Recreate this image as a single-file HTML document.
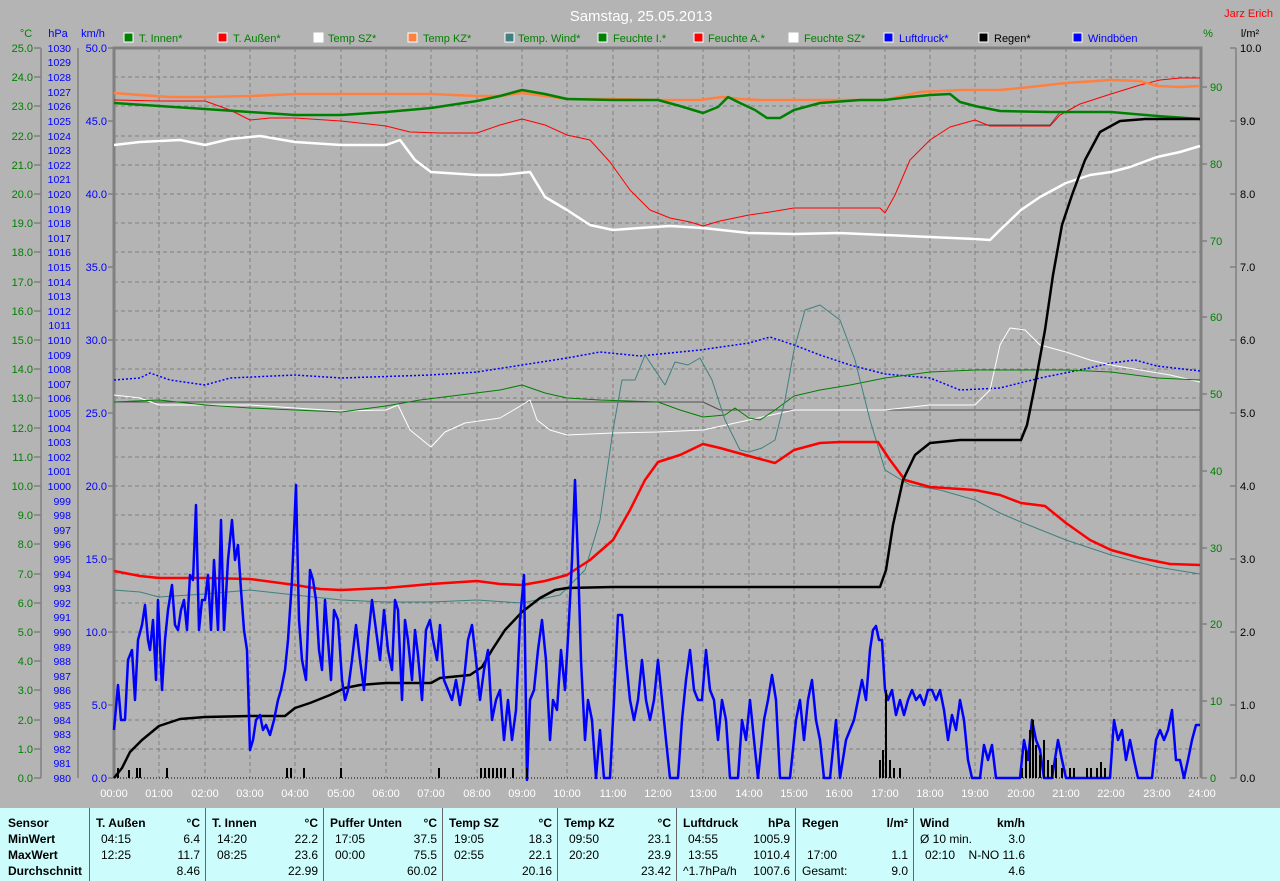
<!DOCTYPE html>
<html><head><meta charset="utf-8"><style>
html,body{margin:0;padding:0;background:#b4b4b4;width:1280px;height:881px;overflow:hidden}
svg{display:block;font-family:"Liberation Sans",sans-serif}
.tb{position:absolute;left:0;top:808px;width:1280px;height:73px;background:#ccfcfc;font-family:"Liberation Sans",sans-serif;font-size:12px;color:#000}
.c{position:absolute;top:0;height:73px;border-left:1px solid #666}
.r{position:absolute;white-space:nowrap}
.b{font-weight:bold}
</style></head><body>
<svg width="1280" height="808" viewBox="0 0 1280 808" xmlns="http://www.w3.org/2000/svg">
<rect width="1280" height="808" fill="#b4b4b4"/>
<text x="641" y="21" fill="#fff" font-size="15" text-anchor="middle">Samstag, 25.05.2013</text>
<text x="1273" y="17" fill="#f00" font-size="11" text-anchor="end">Jarz Erich</text>
<g font-size="11">
<rect x="124" y="33" width="9" height="9" fill="#008000" stroke="#fff"/><text x="139" y="42" fill="#008000">T. Innen*</text>
<rect x="218" y="33" width="9" height="9" fill="#f00" stroke="#fff"/><text x="233" y="42" fill="#008000">T. Außen*</text>
<rect x="314" y="33" width="9" height="9" fill="#fff" stroke="#fff"/><text x="328" y="42" fill="#008000">Temp SZ*</text>
<rect x="408" y="33" width="9" height="9" fill="#ff8040" stroke="#fff"/><text x="423" y="42" fill="#008000">Temp KZ*</text>
<rect x="505" y="33" width="9" height="9" fill="#408080" stroke="#fff"/><text x="518" y="42" fill="#008000">Temp. Wind*</text>
<rect x="598" y="33" width="9" height="9" fill="#008000" stroke="#fff"/><text x="613" y="42" fill="#008000">Feuchte I.*</text>
<rect x="694" y="33" width="9" height="9" fill="#f00" stroke="#fff"/><text x="708" y="42" fill="#008000">Feuchte A.*</text>
<rect x="789" y="33" width="9" height="9" fill="#fff" stroke="#fff"/><text x="804" y="42" fill="#008000">Feuchte SZ*</text>
<rect x="884" y="33" width="9" height="9" fill="#00f" stroke="#fff"/><text x="899" y="42" fill="#00f">Luftdruck*</text>
<rect x="979" y="33" width="9" height="9" fill="#000" stroke="#fff"/><text x="994" y="42" fill="#000">Regen*</text>
<rect x="1073" y="33" width="9" height="9" fill="#00f" stroke="#fff"/><text x="1088" y="42" fill="#00f">Windböen</text>
<text x="26" y="37" fill="#008000" text-anchor="middle">°C</text>
<text x="58" y="37" fill="#00f" text-anchor="middle">hPa</text>
<text x="93" y="37" fill="#00f" text-anchor="middle">km/h</text>
<text x="1208" y="37" fill="#008000" text-anchor="middle">%</text>
<text x="1250" y="37" fill="#000" text-anchor="middle">l/m²</text>
</g>
<!-- grid -->
<g stroke="#808080" stroke-dasharray="4,3" stroke-width="1">
<path d="M114 77H1200M114 106H1200M114 136H1200M114 165H1200M114 194H1200M114 223H1200M114 252H1200M114 282H1200M114 311H1200M114 340H1200M114 369H1200M114 398H1200M114 428H1200M114 457H1200M114 486H1200M114 515H1200M114 544H1200M114 574H1200M114 603H1200M114 632H1200M114 661H1200M114 690H1200M114 720H1200M114 749H1200"/>
<path d="M159 48V778M205 48V778M250 48V778M295 48V778M341 48V778M386 48V778M431 48V778M477 48V778M522 48V778M567 48V778M613 48V778M658 48V778M703 48V778M749 48V778M794 48V778M839 48V778M885 48V778M930 48V778M975 48V778M1021 48V778M1066 48V778M1111 48V778M1157 48V778"/>
</g>
<path d="M114 778H1200" stroke="#000" stroke-dasharray="1,2"/>
<path d="M114 778V48H1201V778" fill="none" stroke="#808080" stroke-width="3"/>
<!-- left axes -->
<path d="M41 48V778M78 48V778M34 48H41M34 77H41M34 106H41M34 136H41M34 165H41M34 194H41M34 223H41M34 252H41M34 282H41M34 311H41M34 340H41M34 369H41M34 398H41M34 428H41M34 457H41M34 486H41M34 515H41M34 544H41M34 574H41M34 603H41M34 632H41M34 661H41M34 690H41M34 720H41M34 749H41M34 778H41M108 48H114M108 121H114M108 194H114M108 267H114M108 340H114M108 413H114M108 486H114M108 559H114M108 632H114M108 705H114M108 778H114M1236 48V778M1230 48H1236M1230 121H1236M1230 194H1236M1230 267H1236M1230 340H1236M1230 413H1236M1230 486H1236M1230 559H1236M1230 632H1236M1230 705H1236M1230 778H1236M1201 87H1207M1201 164H1207M1201 241H1207M1201 317H1207M1201 394H1207M1201 471H1207M1201 548H1207M1201 624H1207M1201 701H1207M1201 778H1207" stroke="#808080" stroke-width="1.5"/>
<g font-size="11" fill="#008000" text-anchor="end">
<text x="33" y="52">25.0</text><text x="33" y="81">24.0</text><text x="33" y="110">23.0</text><text x="33" y="140">22.0</text><text x="33" y="169">21.0</text><text x="33" y="198">20.0</text><text x="33" y="227">19.0</text><text x="33" y="256">18.0</text><text x="33" y="286">17.0</text><text x="33" y="315">16.0</text><text x="33" y="344">15.0</text><text x="33" y="373">14.0</text><text x="33" y="402">13.0</text><text x="33" y="432">12.0</text><text x="33" y="461">11.0</text><text x="33" y="490">10.0</text><text x="33" y="519">9.0</text><text x="33" y="548">8.0</text><text x="33" y="578">7.0</text><text x="33" y="607">6.0</text><text x="33" y="636">5.0</text><text x="33" y="665">4.0</text><text x="33" y="694">3.0</text><text x="33" y="724">2.0</text><text x="33" y="753">1.0</text><text x="33" y="782">0.0</text>
</g>
<g font-size="11" fill="#008000">
<text x="1210" y="91">90</text><text x="1210" y="168">80</text><text x="1210" y="245">70</text><text x="1210" y="321">60</text><text x="1210" y="398">50</text><text x="1210" y="475">40</text><text x="1210" y="552">30</text><text x="1210" y="628">20</text><text x="1210" y="705">10</text><text x="1210" y="782">0</text>
</g>
<g font-size="11" fill="#000">
<text x="1240" y="52">10.0</text><text x="1240" y="125">9.0</text><text x="1240" y="198">8.0</text><text x="1240" y="271">7.0</text><text x="1240" y="344">6.0</text><text x="1240" y="417">5.0</text><text x="1240" y="490">4.0</text><text x="1240" y="563">3.0</text><text x="1240" y="636">2.0</text><text x="1240" y="709">1.0</text><text x="1240" y="782">0.0</text>
</g>
<g font-size="11" fill="#00f" text-anchor="end">
<text x="107" y="52">50.0</text><text x="107" y="125">45.0</text><text x="107" y="198">40.0</text><text x="107" y="271">35.0</text><text x="107" y="344">30.0</text><text x="107" y="417">25.0</text><text x="107" y="490">20.0</text><text x="107" y="563">15.0</text><text x="107" y="636">10.0</text><text x="107" y="709">5.0</text><text x="107" y="782">0.0</text>
</g>
<g font-size="10.5" fill="#00f" text-anchor="end">
<text x="71" y="52">1030</text><text x="71" y="66">1029</text><text x="71" y="81">1028</text><text x="71" y="96">1027</text><text x="71" y="110">1026</text><text x="71" y="125">1025</text><text x="71" y="140">1024</text><text x="71" y="154">1023</text><text x="71" y="169">1022</text><text x="71" y="183">1021</text><text x="71" y="198">1020</text><text x="71" y="213">1019</text><text x="71" y="227">1018</text><text x="71" y="242">1017</text><text x="71" y="256">1016</text><text x="71" y="271">1015</text><text x="71" y="286">1014</text><text x="71" y="300">1013</text><text x="71" y="315">1012</text><text x="71" y="329">1011</text><text x="71" y="344">1010</text><text x="71" y="359">1009</text><text x="71" y="373">1008</text><text x="71" y="388">1007</text><text x="71" y="402">1006</text><text x="71" y="417">1005</text><text x="71" y="432">1004</text><text x="71" y="446">1003</text><text x="71" y="461">1002</text><text x="71" y="475">1001</text><text x="71" y="490">1000</text><text x="71" y="505">999</text><text x="71" y="519">998</text><text x="71" y="534">997</text><text x="71" y="548">996</text><text x="71" y="563">995</text><text x="71" y="578">994</text><text x="71" y="592">993</text><text x="71" y="607">992</text><text x="71" y="621">991</text><text x="71" y="636">990</text><text x="71" y="651">989</text><text x="71" y="665">988</text><text x="71" y="680">987</text><text x="71" y="694">986</text><text x="71" y="709">985</text><text x="71" y="724">984</text><text x="71" y="738">983</text><text x="71" y="753">982</text><text x="71" y="767">981</text><text x="71" y="782">980</text>
</g>
<g font-size="11" fill="#fff" text-anchor="middle">
<text x="114" y="797">00:00</text><text x="159" y="797">01:00</text><text x="205" y="797">02:00</text><text x="250" y="797">03:00</text><text x="295" y="797">04:00</text><text x="341" y="797">05:00</text><text x="386" y="797">06:00</text><text x="431" y="797">07:00</text><text x="477" y="797">08:00</text><text x="522" y="797">09:00</text><text x="567" y="797">10:00</text><text x="613" y="797">11:00</text><text x="658" y="797">12:00</text><text x="703" y="797">13:00</text><text x="749" y="797">14:00</text><text x="794" y="797">15:00</text><text x="839" y="797">16:00</text><text x="885" y="797">17:00</text><text x="930" y="797">18:00</text><text x="975" y="797">19:00</text><text x="1021" y="797">20:00</text><text x="1066" y="797">21:00</text><text x="1111" y="797">22:00</text><text x="1157" y="797">23:00</text><text x="1202" y="797">24:00</text>
</g>
<g fill="none" stroke-linejoin="round">
<!-- dark gray thin -->
<polyline stroke="#505050" stroke-width="1" points="114,402 703,402 720,410 1200,410"/>
<polyline stroke="#505050" stroke-width="1" points="975,125 1050,125 1060,112"/>
<!-- blue dotted luftdruck -->
<polyline stroke="#00f" stroke-width="1.5" stroke-dasharray="2,2" points="114,380 140,378 150,373 170,380 205,385 230,378 295,375 341,378 431,375 477,372 522,365 567,358 600,352 640,356 700,350 749,343 770,337 794,345 820,355 850,365 885,374 930,378 960,390 1000,388 1040,378 1080,370 1111,363 1135,360 1157,366 1200,371"/>
<!-- white thin feuchte SZ -->
<polyline stroke="#fff" stroke-width="1" points="114,395 140,398 159,405 205,405 250,405 295,408 341,411 386,410 398,405 410,430 431,447 445,432 465,423 500,418 522,405 530,400 537,420 550,430 567,435 613,433 658,432 703,430 749,420 794,410 839,410 885,410 930,405 975,405 990,390 1000,345 1010,328 1025,330 1040,345 1066,352 1090,360 1111,365 1140,370 1170,375 1200,382"/>
<!-- green thin feuchte I -->
<polyline stroke="#008000" stroke-width="1" points="114,402 159,400 205,405 250,408 295,410 341,412 386,406 420,400 460,395 500,390 522,385 545,393 567,398 600,400 658,402 680,410 703,417 725,415 735,408 749,418 760,420 775,410 794,396 820,390 850,385 885,378 930,372 975,370 1020,370 1066,370 1111,372 1157,378 1200,380"/>
<!-- teal temp wind -->
<polyline stroke="#408080" stroke-width="1" points="114,590 140,592 159,597 205,594 250,590 295,595 341,600 386,602 431,602 477,600 522,603 560,595 585,570 600,520 613,430 622,380 635,380 645,355 655,370 665,385 675,362 688,365 700,358 712,380 725,420 740,450 749,452 762,448 775,440 785,400 794,350 805,310 820,305 840,320 855,360 870,420 885,470 910,485 940,490 975,500 1000,513 1021,522 1066,540 1111,555 1157,567 1200,574"/>
<!-- red thin feuchte A -->
<polyline stroke="#f00" stroke-width="1" points="114,100 159,101 205,101 230,110 250,120 270,118 295,118 341,121 386,126 410,132 440,133 477,133 500,125 522,119 545,125 567,135 590,140 610,162 630,190 650,210 670,218 690,222 703,226 720,221 749,215 770,212 794,208 839,208 880,208 885,213 895,195 910,160 930,140 950,127 975,120 990,126 1050,126 1060,115 1080,104 1111,94 1140,85 1160,80 1180,78 1200,78"/>
<!-- orange temp KZ -->
<polyline stroke="#ff8040" stroke-width="2.5" points="114,93 140,95 170,97 205,97 250,96 295,94 341,94 386,94 431,94 477,96 500,96 522,93 545,96 567,99 613,99 658,100 700,100 722,97 740,99 760,100 794,100 839,100 885,100 920,92 960,90 1000,90 1021,88 1066,83 1111,80 1140,81 1157,86 1180,87 1200,86"/>
<!-- green thick T innen -->
<polyline stroke="#008000" stroke-width="2.5" points="114,103 159,106 205,109 250,112 295,115 341,115 386,112 431,108 477,101 500,96 522,90 545,94 567,99 613,100 658,100 680,106 703,113 718,107 728,97 740,103 755,110 767,118 780,118 794,110 820,103 860,100 885,100 910,97 930,95 950,94 960,102 975,106 1000,111 1050,112 1111,112 1157,116 1200,119"/>
<!-- white thick temp SZ -->
<polyline stroke="#fff" stroke-width="2.5" points="114,145 140,142 180,140 205,145 230,139 260,136 295,142 341,145 386,145 400,140 415,160 431,172 477,175 500,175 530,172 545,197 567,210 590,225 613,230 640,228 670,226 703,228 749,233 794,234 839,233 885,235 930,237 975,239 990,240 1000,230 1021,210 1040,197 1066,183 1090,175 1111,172 1130,167 1157,157 1180,152 1200,146"/>
<!-- red thick T außen -->
<polyline stroke="#f00" stroke-width="2.5" points="114,571 140,576 159,578 205,578 250,579 295,585 320,589 341,590 386,588 431,584 477,581 500,584 522,585 545,581 567,575 590,560 613,540 630,510 645,480 658,462 680,455 703,444 720,448 749,456 775,463 794,450 820,443 840,442 878,442 890,460 905,480 930,487 975,490 1000,495 1021,503 1045,506 1066,523 1090,540 1111,550 1140,558 1170,564 1200,565"/>
<!-- black rain -->
<polyline stroke="#000" stroke-width="2.5" points="114,778 122,768 130,752 142,740 159,726 180,719 205,717 250,716 285,716 295,708 310,703 330,695 345,688 360,685 386,683 431,683 440,678 470,675 482,667 492,650 505,630 522,612 540,598 555,590 567,588 613,587 700,587 800,587 880,587 886,570 893,525 903,480 915,455 930,443 960,440 1000,440 1021,440 1027,425 1035,385 1045,330 1053,275 1062,225 1072,195 1085,160 1100,132 1120,121 1145,119 1200,119"/>
<!-- blue wind -->
<polyline stroke="#00f" stroke-width="2.5" points="114,730 118,685 121,720 125,720 128,660 132,650 135,700 138,640 142,625 145,605 148,640 150,650 153,620 156,680 158,600 162,690 165,640 168,610 172,585 175,625 178,630 181,610 184,600 187,630 190,575 193,580 196,505 199,630 202,600 205,600 208,575 211,630 214,560 218,630 221,520 224,630 228,560 232,520 235,560 238,545 241,590 244,630 247,650 250,750 253,740 256,720 260,715 263,730 266,725 270,735 274,720 278,700 281,690 285,670 288,640 292,580 296,485 299,620 302,660 306,680 310,570 313,580 316,600 319,650 322,670 325,600 328,640 331,680 334,610 338,620 342,680 345,700 348,690 352,660 356,625 360,660 364,690 368,640 372,600 376,630 380,660 384,610 388,650 392,670 395,600 398,610 402,700 405,620 408,640 412,680 415,630 418,655 422,700 426,630 430,620 433,640 437,660 440,625 444,680 448,690 452,700 456,680 460,705 464,680 468,640 472,625 476,660 480,700 484,670 488,650 492,720 496,700 500,690 504,740 508,700 512,740 516,710 520,620 524,575 527,780 530,700 534,690 538,650 542,620 546,660 550,740 553,700 557,710 561,650 565,690 569,620 572,560 575,480 578,560 581,660 585,740 588,700 592,720 596,778 600,730 604,778 610,778 614,700 618,615 622,615 626,660 630,700 634,720 638,700 642,660 646,700 650,720 654,700 658,660 662,700 666,740 670,778 678,778 682,720 686,680 690,650 694,690 698,700 702,700 706,650 710,690 714,700 718,740 722,700 726,720 730,778 738,778 742,720 746,740 750,700 754,740 758,778 764,720 768,700 772,675 776,700 780,778 790,778 796,720 800,700 804,740 808,700 812,680 816,720 820,740 824,778 830,778 836,720 840,778 846,740 850,730 854,720 858,700 862,680 866,700 870,650 873,630 876,626 879,640 882,640 885,690 888,700 892,690 896,715 900,700 904,715 908,700 912,690 916,700 920,695 924,705 928,690 932,690 936,700 940,690 944,710 948,740 952,715 956,730 960,700 964,720 968,760 972,778 980,778 984,745 988,760 992,745 996,778 1020,778 1024,740 1028,760 1032,720 1036,740 1040,750 1044,778 1052,778 1058,740 1062,760 1066,778 1110,778 1114,720 1118,740 1122,730 1126,760 1130,740 1134,760 1138,778 1152,778 1156,740 1160,730 1164,740 1168,730 1172,710 1176,760 1180,760 1184,778 1188,760 1192,740 1196,725 1200,725"/>
</g>
<!-- rain bars -->
<path d="M118 778V768M129 778V770M137 778V768M140 778V768M167 778V768M287 778V768M291 778V768M304 778V768M341 778V768M439 778V768M481 778V768M485 778V768M489 778V768M493 778V768M497 778V768M501 778V768M505 778V768M513 778V768M527 778V768M880 778V760M883 778V750M886 778V690M890 778V760M894 778V768M900 778V768M1022 778V768M1026 778V750M1030 778V730M1033 778V720M1036 778V745M1040 778V755M1044 778V740M1048 778V760M1052 778V765M1056 778V758M1062 778V768M1070 778V768M1074 778V768M1087 778V768M1091 778V768M1097 778V768M1101 778V762M1105 778V768" stroke="#000" stroke-width="2"/>
</svg>
<div class="tb">
<div class="r b" style="left:8px;top:8px">Sensor</div>
<div class="r b" style="left:8px;top:24px">MinWert</div>
<div class="r b" style="left:8px;top:40px">MaxWert</div>
<div class="r b" style="left:8px;top:56px">Durchschnitt</div>
<div class="c" style="left:89px;width:116px">
<div class="r b" style="left:6px;top:8px">T. Außen</div><div class="r b" style="right:6px;top:8px">°C</div>
<div class="r" style="left:11px;top:24px">04:15</div><div class="r" style="right:6px;top:24px">6.4</div>
<div class="r" style="left:11px;top:40px">12:25</div><div class="r" style="right:6px;top:40px">11.7</div>
<div class="r" style="right:6px;top:56px">8.46</div></div>
<div class="c" style="left:205px;width:118px">
<div class="r b" style="left:6px;top:8px">T. Innen</div><div class="r b" style="right:6px;top:8px">°C</div>
<div class="r" style="left:11px;top:24px">14:20</div><div class="r" style="right:6px;top:24px">22.2</div>
<div class="r" style="left:11px;top:40px">08:25</div><div class="r" style="right:6px;top:40px">23.6</div>
<div class="r" style="right:6px;top:56px">22.99</div></div>
<div class="c" style="left:323px;width:119px">
<div class="r b" style="left:6px;top:8px">Puffer Unten</div><div class="r b" style="right:6px;top:8px">°C</div>
<div class="r" style="left:11px;top:24px">17:05</div><div class="r" style="right:6px;top:24px">37.5</div>
<div class="r" style="left:11px;top:40px">00:00</div><div class="r" style="right:6px;top:40px">75.5</div>
<div class="r" style="right:6px;top:56px">60.02</div></div>
<div class="c" style="left:442px;width:115px">
<div class="r b" style="left:6px;top:8px">Temp SZ</div><div class="r b" style="right:6px;top:8px">°C</div>
<div class="r" style="left:11px;top:24px">19:05</div><div class="r" style="right:6px;top:24px">18.3</div>
<div class="r" style="left:11px;top:40px">02:55</div><div class="r" style="right:6px;top:40px">22.1</div>
<div class="r" style="right:6px;top:56px">20.16</div></div>
<div class="c" style="left:557px;width:119px">
<div class="r b" style="left:6px;top:8px">Temp KZ</div><div class="r b" style="right:6px;top:8px">°C</div>
<div class="r" style="left:11px;top:24px">09:50</div><div class="r" style="right:6px;top:24px">23.1</div>
<div class="r" style="left:11px;top:40px">20:20</div><div class="r" style="right:6px;top:40px">23.9</div>
<div class="r" style="right:6px;top:56px">23.42</div></div>
<div class="c" style="left:676px;width:119px">
<div class="r b" style="left:6px;top:8px">Luftdruck</div><div class="r b" style="right:6px;top:8px">hPa</div>
<div class="r" style="left:11px;top:24px">04:55</div><div class="r" style="right:6px;top:24px">1005.9</div>
<div class="r" style="left:11px;top:40px">13:55</div><div class="r" style="right:6px;top:40px">1010.4</div>
<div class="r" style="left:6px;top:56px">^1.7hPa/h</div><div class="r" style="right:6px;top:56px">1007.6</div></div>
<div class="c" style="left:795px;width:118px">
<div class="r b" style="left:6px;top:8px">Regen</div><div class="r b" style="right:6px;top:8px">l/m²</div>
<div class="r" style="left:11px;top:40px">17:00</div><div class="r" style="right:6px;top:40px">1.1</div>
<div class="r" style="left:6px;top:56px">Gesamt:</div><div class="r" style="right:6px;top:56px">9.0</div></div>
<div class="c" style="left:913px;width:117px;border-right:none">
<div class="r b" style="left:6px;top:8px">Wind</div><div class="r b" style="right:6px;top:8px">km/h</div>
<div class="r" style="left:6px;top:24px">Ø 10 min.</div><div class="r" style="right:6px;top:24px">3.0</div>
<div class="r" style="left:11px;top:40px">02:10</div><div class="r" style="right:6px;top:40px">N-NO 11.6</div>
<div class="r" style="right:6px;top:56px">4.6</div></div>
</div>
</body></html>
